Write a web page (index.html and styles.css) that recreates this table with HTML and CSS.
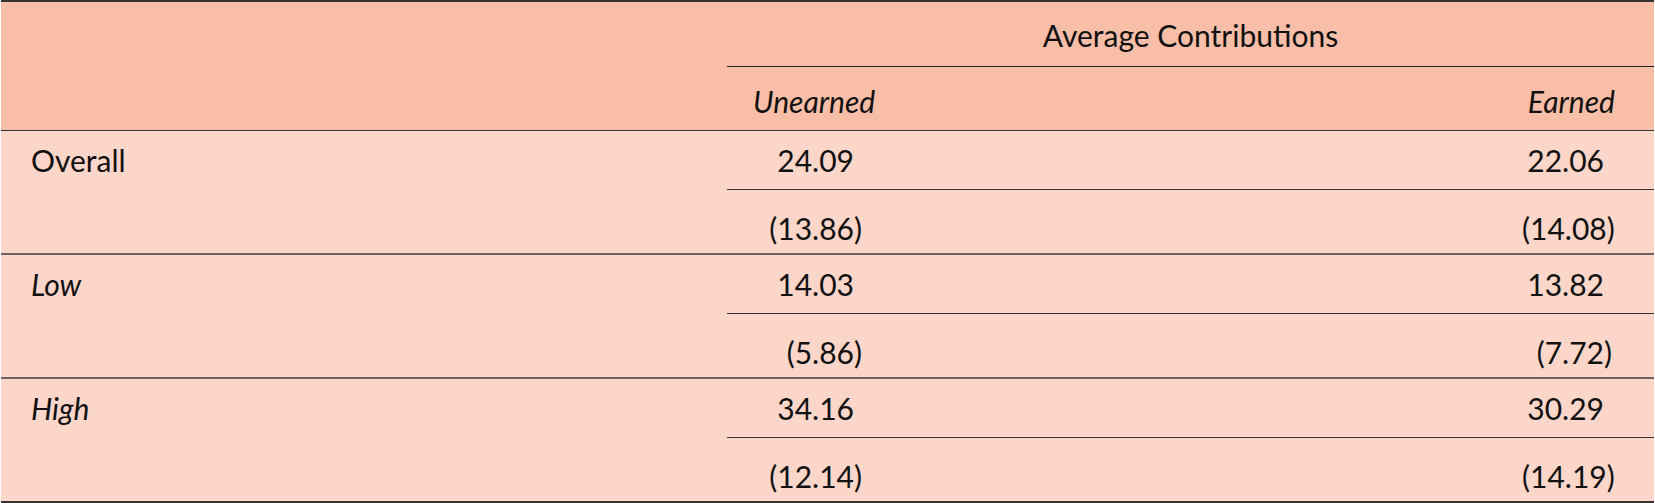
FILE: index.html
```html
<!DOCTYPE html>
<html lang="en">
<head>
<meta charset="utf-8">
<title>Average Contributions</title>
<link rel="stylesheet" href="styles.css">
</head>
<body>
<div class="tbl">
  <div class="hd hd1">
    <div class="stub"></div>
    <div class="spanner"><span>Average Contributions</span></div>
  </div>
  <div class="hd hd2">
    <div class="stub"></div>
    <div class="c2"><span class="it">Unearned</span></div>
    <div class="c3 hc3"><span class="it">Earned</span></div>
  </div>

  <div class="grp">
    <div class="label">Overall</div>
    <div class="vals">
      <div class="sub est">
        <div class="c2"><span class="box b2">24.09<i class="ph">)</i></span></div>
        <div class="c3"><span class="box b3">22.06<i class="ph">)</i></span></div>
      </div>
      <div class="sub se">
        <div class="c2"><span class="box b2">(13.86)</span></div>
        <div class="c3"><span class="box b3">(14.08)</span></div>
      </div>
    </div>
  </div>

  <div class="grp">
    <div class="label it">Low</div>
    <div class="vals">
      <div class="sub est">
        <div class="c2"><span class="box b2">14.03<i class="ph">)</i></span></div>
        <div class="c3"><span class="box b3">13.82<i class="ph">)</i></span></div>
      </div>
      <div class="sub se">
        <div class="c2"><span class="box b2">(5.86)</span></div>
        <div class="c3"><span class="box b3">(7.72)</span></div>
      </div>
    </div>
  </div>

  <div class="grp last">
    <div class="label it">High</div>
    <div class="vals">
      <div class="sub est">
        <div class="c2"><span class="box b2">34.16<i class="ph">)</i></span></div>
        <div class="c3"><span class="box b3">30.29<i class="ph">)</i></span></div>
      </div>
      <div class="sub se">
        <div class="c2"><span class="box b2">(12.14)</span></div>
        <div class="c3"><span class="box b3">(14.19)</span></div>
      </div>
    </div>
  </div>
</div>
</body>
</html>
```

FILE: styles.css
```css
html, body {
  margin: 0;
  padding: 0;
  background: #ffffff;
}

body {
  font-family: "Lato", "Noto Sans", sans-serif;
  font-size: 30px;
  color: #111111;
}

.tbl {
  width: 1653px;
  margin-left: 1px;
  border-top: 2px solid #333333;
  border-bottom: 3px solid #333333;
  background: #fcd6c9;
}

.hd {
  display: grid;
  grid-template-columns: 726px 1fr;
  background: #f9bea7;
}

.hd1 {
  height: 65px;
}

.hd2 {
  grid-template-columns: 726px 1fr 1fr;
  height: 63px;
  border-bottom: 1px solid #333333;
}

.spanner {
  display: flex;
  align-items: center;
  justify-content: center;
  border-bottom: 1px solid #222222;
  padding-top: 2px;
}

.hd2 .c2, .hd2 .c3 {
  padding-top: 4px;
}

.c2, .c3 {
  display: flex;
  align-items: center;
}

.c2 {
  padding-left: 26px;
}

.c3 {
  justify-content: flex-end;
  padding-right: 42px;
}

.hc3 {
  padding-right: 39px;
}

.box {
  display: inline-block;
  text-align: right;
}

.b2 {
  width: 109px;
}

.b3 {
  width: 90px;
}

.it {
  font-style: italic;
}

.ph {
  visibility: hidden;
  font-style: normal;
}

.grp {
  display: grid;
  grid-template-columns: 726px 1fr;
  border-bottom: 2px solid #6b6262;
}

.grp.last {
  border-bottom: none;
}

.label {
  padding-left: 30px;
  height: 58px;
  display: flex;
  align-items: center;
}

.sub {
  display: grid;
  grid-template-columns: 1fr 1fr;
}

.sub.est {
  height: 58px;
  border-bottom: 1px solid #333333;
}

.sub.se {
  height: 63px;
  padding-top: 13px;
  box-sizing: border-box;
}
```
